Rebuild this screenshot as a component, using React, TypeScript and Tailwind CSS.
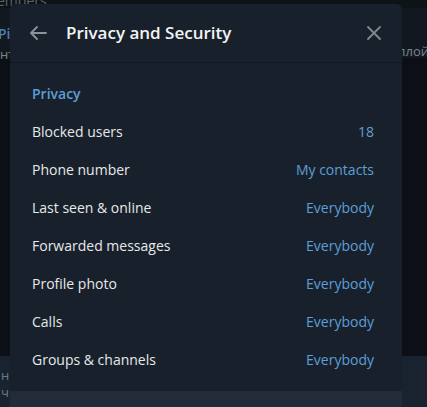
import React from "react";

const rows: [string, string][] = [
  ["Blocked users", "18"],
  ["Phone number", "My contacts"],
  ["Last seen & online", "Everybody"],
  ["Forwarded messages", "Everybody"],
  ["Profile photo", "Everybody"],
  ["Calls", "Everybody"],
  ["Groups & channels", "Everybody"],
];

export default function App() {
  return (
    <div
      className="relative w-[427px] h-[407px] overflow-hidden bg-[#0c1117]"
      style={{ fontFamily: '"Open Sans", "Noto Sans", sans-serif' }}
    >
      {/* background app (dimmed) */}
      <div className="absolute inset-0 flex flex-col">
        <div className="h-[14px] bg-[#0e1318] text-[#5c6269] text-[14px] leading-[14px] -mt-[6px] overflow-hidden">
          <span className="relative -left-[3px]">embers</span>
        </div>
        <div className="h-[50px] bg-[#121820] relative">
          <span className="absolute left-[-2px] top-[15px] text-[14px] font-semibold text-[#4a7fb0]">Pi</span>
          <span className="absolute left-[0px] top-[37px] text-[13px] text-[#7d848b]">нт</span>
          <span className="absolute right-[-2px] top-[34px] text-[13px] text-[#7d848b]">ллой</span>
        </div>
        <div className="h-[298px] bg-[#0c1016]" />
        <div className="flex-1 bg-[#19232f] relative">
          <span className="absolute left-[1px] top-[12px] text-[13px] leading-[14px] text-[#6c7a88]">н</span>
          <span className="absolute left-[1px] top-[29px] text-[13px] leading-[14px] text-[#6c7a88]">ч</span>
        </div>
      </div>

      {/* dialog */}
      <div className="absolute left-[10px] top-[4px] w-[392px] h-[420px] rounded-t-[6px] bg-[#18212b] flex flex-col">
        <div className="h-[59px] shrink-0 flex items-center border-b border-[#111820]">
          <div className="w-[56px] flex justify-start pl-[19px]">
            <svg width="18" height="16" viewBox="0 0 18 16" fill="none" stroke="#8a939c" strokeWidth="1.8" strokeLinecap="round" strokeLinejoin="round">
              <path d="M17 8H2M8 2L2 8l6 6" />
            </svg>
          </div>
          <div className="flex-1 text-[17px] font-semibold text-[#f3f4f5] leading-none pb-[2px]">
            Privacy and Security
          </div>
          <div className="w-[56px] flex justify-end pr-[20px]">
            <svg width="16" height="16" viewBox="0 0 16 16" fill="none" stroke="#7f8891" strokeWidth="1.8" strokeLinecap="round">
              <path d="M2 2l12 12M14 2L2 14" />
            </svg>
          </div>
        </div>

        <div className="pt-[19px] pb-[13px] bg-[#18212b]">
          <div className="h-[22px] flex items-center px-[22px] mb-[8px] text-[14px] font-semibold text-[#5d9ed9]">
            Privacy
          </div>
          {rows.map(([label, value]) => (
            <div key={label} className="h-[38px] flex items-center justify-between px-[22px] pr-[28px] text-[14px]">
              <span className="text-[#e6e8ea]">{label}</span>
              <span className="text-[#5d9ed9]">{value}</span>
            </div>
          ))}
        </div>
        <div className="flex-1 bg-[#222c39] pt-[13px] px-[22px] text-[13px] text-[#7f8a95]">
          Change who can add you to groups and channels.
        </div>
      </div>
    </div>
  );
}
